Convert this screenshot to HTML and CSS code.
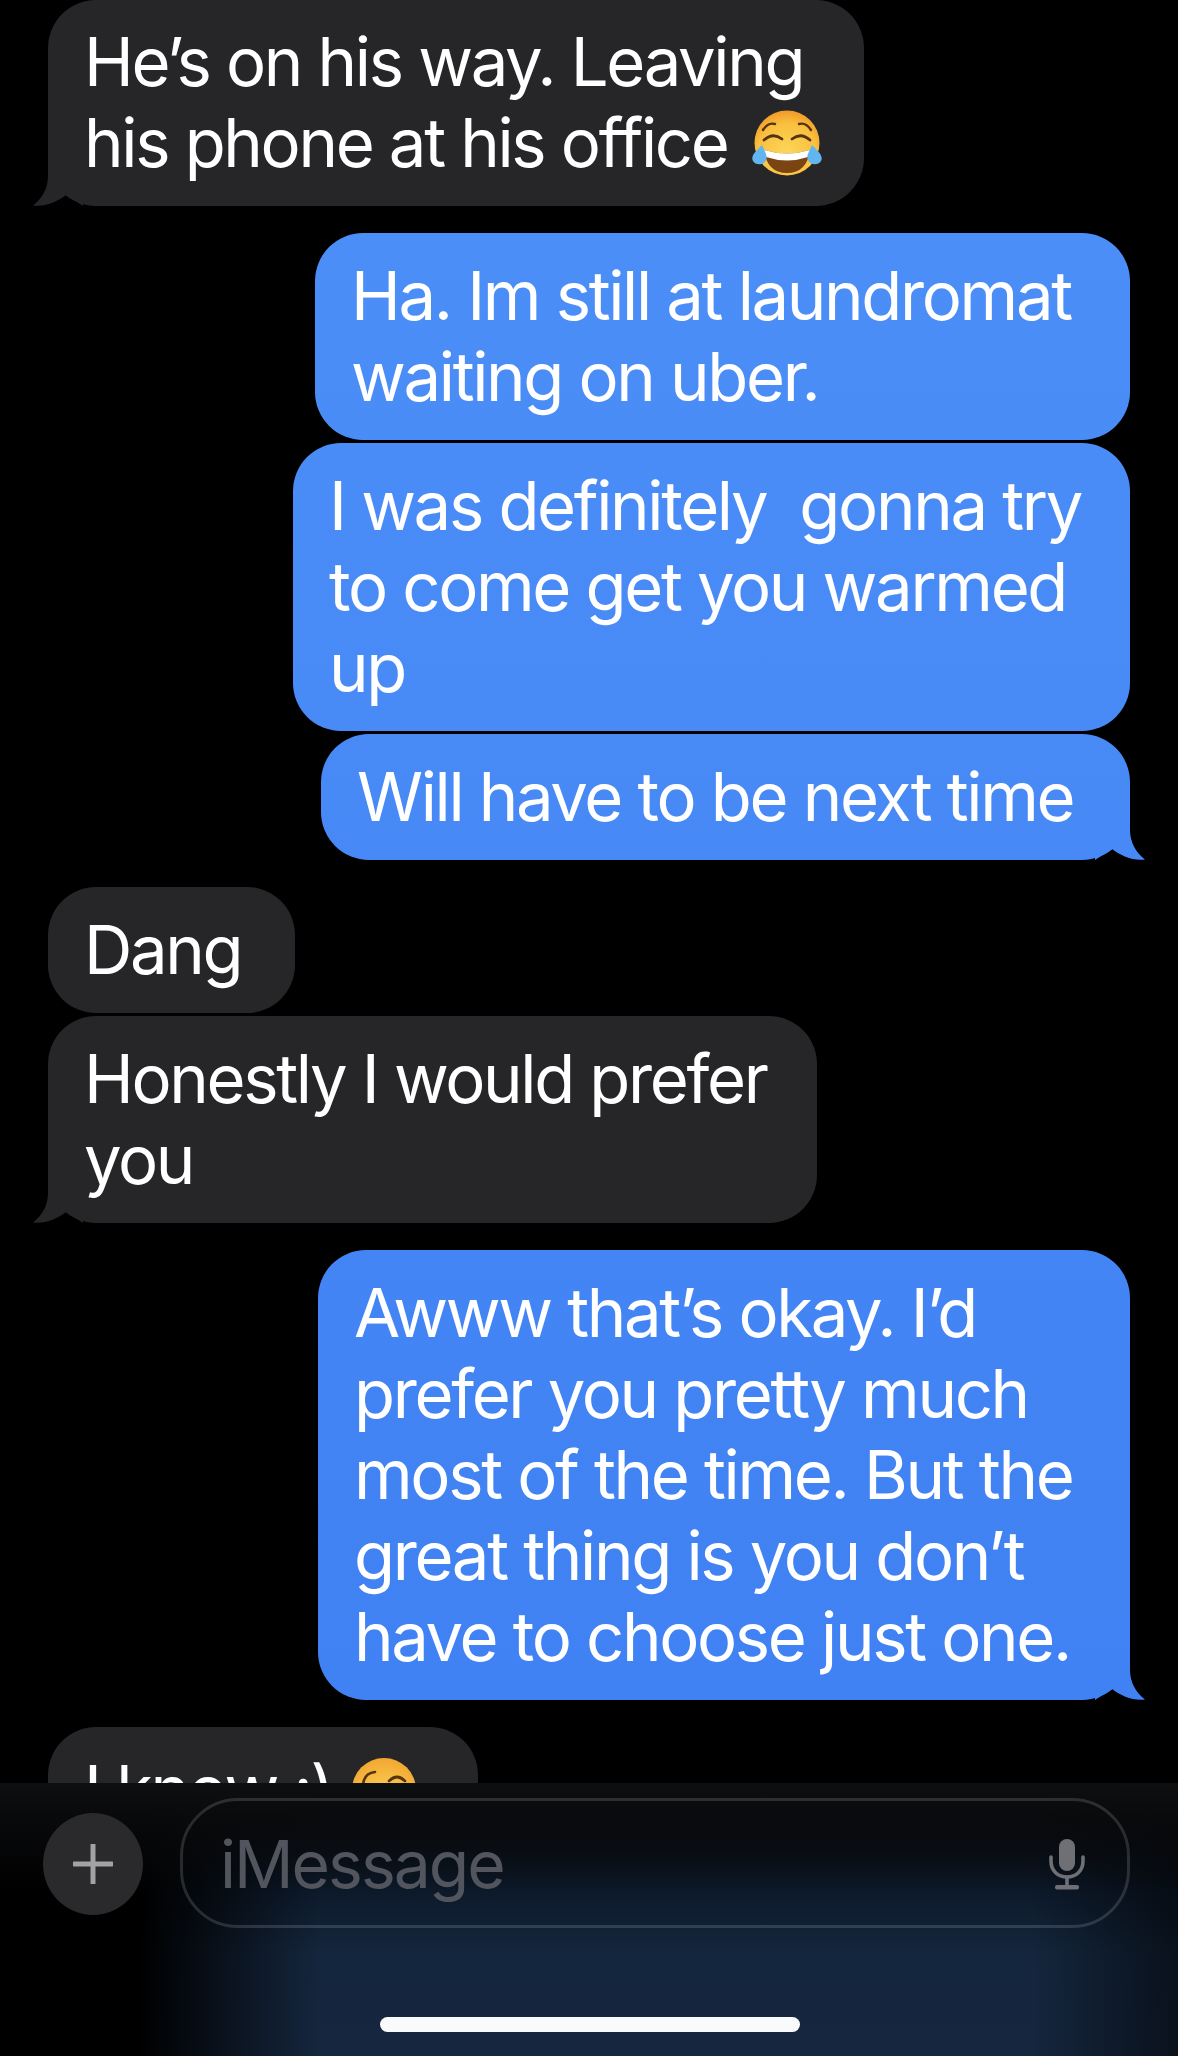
FILE: index.html
```html
<!DOCTYPE html>
<html>
<head>
<meta charset="UTF-8">
<link rel="stylesheet" href="styles.css">
<title>Messages</title>
</head>
<body>

<div class="thread">

  <div class="bubble recv w-1">
    He’s on his way. Leaving<br>his phone at his office
    <svg class="emoji" viewBox="0 0 72 66" width="72" height="66">
      <defs>
        <radialGradient id="face1" cx="50%" cy="65%" r="65%">
          <stop offset="0" stop-color="#fdd65a"/>
          <stop offset="0.7" stop-color="#f9c03e"/>
          <stop offset="1" stop-color="#f09a2a"/>
        </radialGradient>
      </defs>
      <circle cx="36" cy="33" r="32.5" fill="url(#face1)"/>
      <path d="M12 20 Q17 12 24 14 M60 20 Q55 12 48 14" fill="none" stroke="#55330f" stroke-width="2.4" stroke-linecap="round"/>
      <path d="M13 30 Q22 22 31 29 M41 29 Q50 22 59 30" fill="none" stroke="#55330f" stroke-width="2.8" stroke-linecap="round"/>
      <path d="M13 40 Q36 47 59 40 Q56 63 36 63 Q16 63 13 40 Z" fill="#7b4513"/>
      <path d="M13 40 Q36 47 59 40 L57 47 Q36 54 15 47 Z" fill="#fff"/>
      <path d="M11 35 C14 42 17 46 15 50 C13 55 5 56 2 51 C-1 46 6 40 11 35 Z" fill="#63b5ef"/>
      <path d="M61 35 C58 42 55 46 57 50 C59 55 67 56 70 51 C73 46 66 40 61 35 Z" fill="#63b5ef"/>
    </svg>
    <svg class="tail tail-left" viewBox="0 0 50 50" width="50" height="50"><path d="M15 0 L15 20 C15 32 9 43 0 49.5 C12 51 24 46 33 39 L50 50 L50 0 Z" fill="#262628"/></svg>
  </div>

  <div class="bubble sent w-2 next-sender">Ha. Im still at laundromat<br>waiting on uber.</div>
  <div class="bubble sent w-3 same-sender">I was definitely&nbsp; gonna try<br>to come get you warmed<br>up</div>
  <div class="bubble sent w-4 same-sender">
    Will have to be next time
    <svg class="tail tail-right" viewBox="0 0 50 50" width="50" height="50"><path class="tail-fill" d="M35 0 L35 20 C35 32 41 43 50 49.5 C38 51 26 46 17 39 L0 50 L0 0 Z"/></svg>
  </div>

  <div class="bubble recv w-5 next-sender">Dang</div>
  <div class="bubble recv w-6 same-sender">
    Honestly I would prefer<br>you
    <svg class="tail tail-left" viewBox="0 0 50 50" width="50" height="50"><path d="M15 0 L15 20 C15 32 9 43 0 49.5 C12 51 24 46 33 39 L50 50 L50 0 Z" fill="#262628"/></svg>
  </div>

  <div class="bubble sent w-7 next-sender">
    Awww that’s okay. I’d<br>prefer you pretty much<br>most of the time. But the<br>great thing is you don’t<br>have to choose just one.
    <svg class="tail tail-right" viewBox="0 0 50 50" width="50" height="50"><path class="tail-fill" d="M35 0 L35 20 C35 32 41 43 50 49.5 C38 51 26 46 17 39 L0 50 L0 0 Z"/></svg>
  </div>

  <div class="bubble recv w-8 next-sender">
    I know :)
    <svg class="emoji emoji-smile" viewBox="0 0 66 66" width="66" height="66">
      <defs>
        <radialGradient id="face2" cx="50%" cy="65%" r="65%">
          <stop offset="0" stop-color="#fdd65a"/>
          <stop offset="1" stop-color="#f2a832"/>
        </radialGradient>
      </defs>
      <circle cx="33" cy="33" r="32" fill="url(#face2)"/>
      <path d="M12 28 Q13 16 24 15 M54 24 Q46 16 38 24" fill="none" stroke="#55330f" stroke-width="2.6" stroke-linecap="round"/>
    </svg>
  </div>

</div>

<div class="composer">
  <div class="input-row">
    <div class="plus">
      <svg viewBox="0 0 40 40" width="40" height="40"><path d="M20 1 V39 M1 20 H39" stroke="#a2a2a5" stroke-width="5" stroke-linecap="round"/></svg>
    </div>
    <div class="field">
      <span class="placeholder">iMessage</span>
      <svg class="mic" viewBox="0 0 36 52" width="36" height="52">
        <rect x="10" y="1" width="16" height="32" rx="8" fill="#6e7076"/>
        <path d="M2 19 V23 C2 33 9 39 18 39 C27 39 34 33 34 23 V19" fill="none" stroke="#6e7076" stroke-width="3.6" stroke-linecap="round"/>
        <path d="M18 39 V48" stroke="#6e7076" stroke-width="3.6"/>
        <rect x="6" y="47" width="24" height="4.5" rx="2" fill="#6e7076"/>
      </svg>
    </div>
  </div>
  <div class="home-bar"></div>
</div>

</body>
</html>
```

FILE: styles.css
```css
html, body { margin: 0; padding: 0; background-color: #000000; }
body { width: 1178px; height: 2056px; overflow: hidden;
       font-family: Inter, "Liberation Sans", sans-serif; }

.thread { height: 1783px; overflow: hidden; box-sizing: border-box;
          padding: 0 48px; display: flex; flex-direction: column; }

.bubble { position: relative; box-sizing: border-box; flex: none;
          padding: 21.5px 0 23.5px 36px; border-radius: 48px;
          font-size: 67px; line-height: 81px; letter-spacing: -2.35px; color: #FFFFFF;
          white-space: nowrap; }
.recv { background-color: #262628; align-self: flex-start; }
.sent { align-self: flex-end;
        background-image: linear-gradient(#4E90F8, #3D7EF2);
        background-attachment: fixed; }

.next-sender { margin-top: 27px; }
.same-sender { margin-top: 3px; }

.w-1 { width: 816px; height: 206px; padding-top: 21px; }
.w-2 { width: 815px; }
.w-3 { width: 837px; }
.w-4 { width: 809px; }
.w-5 { width: 247px; }
.w-6 { width: 769px; }
.w-7 { width: 812px; }
.w-8 { width: 430px; }

.tail { position: absolute; bottom: 0; }
.tail-left { left: -15px; }
.tail-right { right: -15px; }
.w-4 .tail-fill { fill: #4789F6; }
.w-7 .tail-fill { fill: #4081F3; }

.emoji { vertical-align: -9px; margin-left: 7px; }
.emoji-smile { margin-left: 2px; }

.composer { height: 273px; box-sizing: border-box; padding: 15px 48px 0 43px;
            background:
              linear-gradient(to bottom, #0E0F11 0, rgba(10,11,13,0.9) 30px, rgba(10,11,13,0) 110px),
              linear-gradient(to right, #000000 140px, rgba(0,0,0,0) 320px, rgba(0,0,0,0) 1030px, rgba(0,0,0,0.55) 1178px),
              linear-gradient(to bottom, #05080D 40px, #0D1A2B 110px, #14263D 170px, #15263E 273px); }

.input-row { display: flex; gap: 37px; align-items: flex-start; }

.plus { width: 100px; height: 102px; margin-top: 15px; border-radius: 50%; background-color: #2A2A2C;
        display: flex; align-items: center; justify-content: center; flex: none; }

.field { flex: 1; height: 130px; box-sizing: border-box;
         border: 3px solid rgba(255,255,255,0.14); border-radius: 58px;
         display: flex; align-items: center; justify-content: space-between;
         padding: 2px 42px 0 37px; }
.placeholder { font-size: 66px; letter-spacing: -2px; color: #52555E; }
.mic { display: block; }

.home-bar { width: 420px; height: 15px; margin: 89px 0 0 337px;
            border-radius: 8px; background-color: #F8FAFC; }
```
